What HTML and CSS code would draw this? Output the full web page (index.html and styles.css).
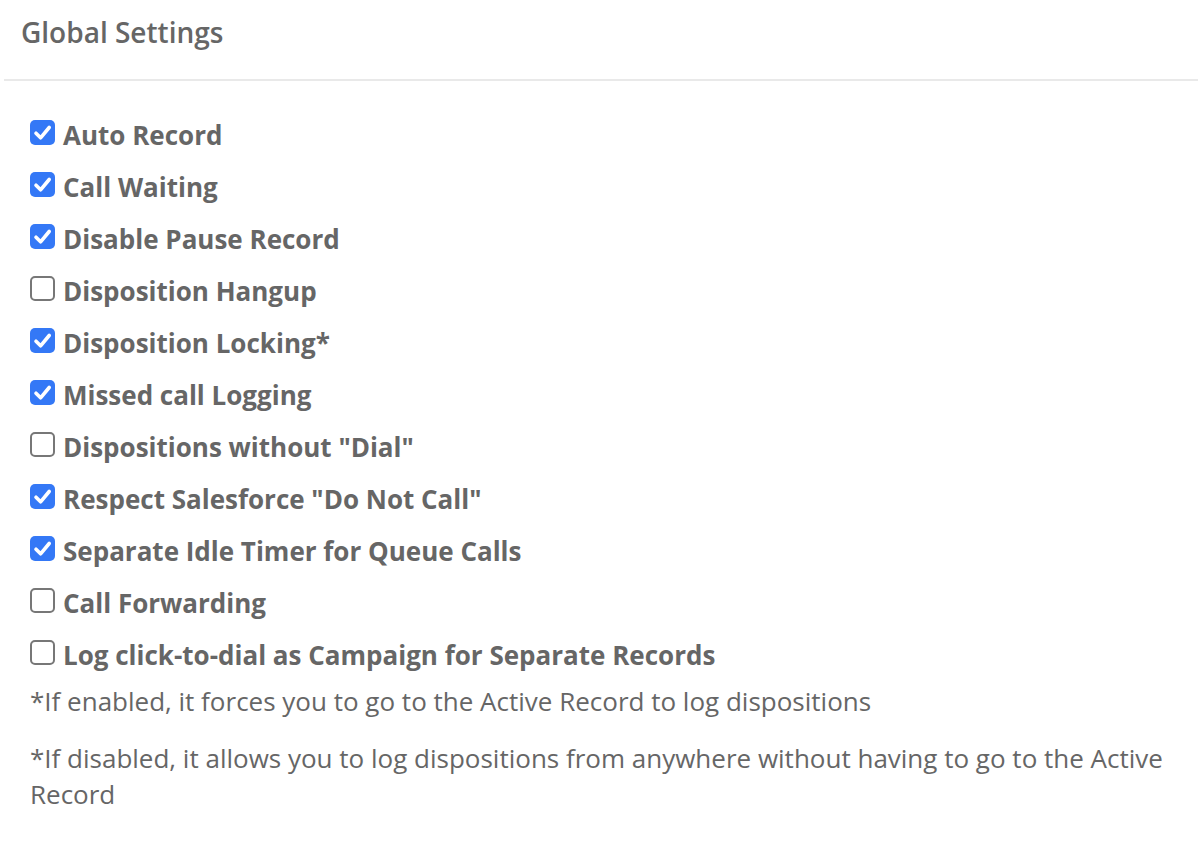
FILE: index.html
```html
<!DOCTYPE html>
<html>
<head>
<meta charset="utf-8">
<link rel="stylesheet" href="styles.css">
</head>
<body>
<div class="panel">
  <div class="panel-header">Global Settings</div>
  <div class="panel-body">
    <ul class="options">
      <li class="option"><span class="box checked"><svg viewBox="0 0 25 25"><path d="M6 13.2l4.6 4.6 8.6-10.3"/></svg></span><span class="label">Auto Record</span></li>
      <li class="option"><span class="box checked"><svg viewBox="0 0 25 25"><path d="M6 13.2l4.6 4.6 8.6-10.3"/></svg></span><span class="label">Call Waiting</span></li>
      <li class="option"><span class="box checked"><svg viewBox="0 0 25 25"><path d="M6 13.2l4.6 4.6 8.6-10.3"/></svg></span><span class="label">Disable Pause Record</span></li>
      <li class="option"><span class="box"></span><span class="label">Disposition Hangup</span></li>
      <li class="option"><span class="box checked"><svg viewBox="0 0 25 25"><path d="M6 13.2l4.6 4.6 8.6-10.3"/></svg></span><span class="label">Disposition Locking*</span></li>
      <li class="option"><span class="box checked"><svg viewBox="0 0 25 25"><path d="M6 13.2l4.6 4.6 8.6-10.3"/></svg></span><span class="label">Missed call Logging</span></li>
      <li class="option"><span class="box"></span><span class="label">Dispositions without "Dial"</span></li>
      <li class="option"><span class="box checked"><svg viewBox="0 0 25 25"><path d="M6 13.2l4.6 4.6 8.6-10.3"/></svg></span><span class="label">Respect Salesforce "Do Not Call"</span></li>
      <li class="option"><span class="box checked"><svg viewBox="0 0 25 25"><path d="M6 13.2l4.6 4.6 8.6-10.3"/></svg></span><span class="label">Separate Idle Timer for Queue Calls</span></li>
      <li class="option"><span class="box"></span><span class="label">Call Forwarding</span></li>
      <li class="option"><span class="box"></span><span class="label">Log click-to-dial as Campaign for Separate Records</span></li>
    </ul>
    <p class="note note-first">*If enabled, it forces you to go to the Active Record to log dispositions</p>
    <p class="note">*If disabled, it allows you to log dispositions from anywhere without having to go to the Active Record</p>
  </div>
</div>
</body>
</html>
```
FILE: styles.css
```css
html, body {
  margin: 0;
  padding: 0;
  background: #ffffff;
}
body {
  font-family: "Open Sans", "Liberation Sans", sans-serif;
  color: #666666;
}
.panel {
  margin: 0 3px 0 4px;
}
.panel-header {
  height: 81px;
  box-sizing: border-box;
  padding: 13px 0 0 17px;
  font-size: 28px;
  font-weight: 600;
  line-height: 38px;
  border-bottom: 2px solid #e9e9e9;
}
.panel-body {
  padding: 28px 0 0 26px;
}
.options {
  list-style: none;
  margin: 0;
  padding: 0;
  display: flex;
  flex-direction: column;
}
.option {
  height: 52px;
  display: flex;
  align-items: center;
  gap: 8px;
}
.box {
  width: 25px;
  height: 25px;
  box-sizing: border-box;
  border: 2px solid #777777;
  border-radius: 5px;
  display: flex;
  align-items: center;
  justify-content: center;
  flex: none;
  position: relative;
  top: -3px;
}
.box.checked {
  background: #3478f6;
  border: none;
}
.box svg {
  width: 25px;
  height: 25px;
  fill: none;
  stroke: #ffffff;
  stroke-width: 3.6;
  stroke-linecap: round;
  stroke-linejoin: round;
}
.label {
  font-size: 26px;
  font-weight: 700;
  line-height: 36px;
}
.note {
  margin: 0;
  font-size: 26px;
  line-height: 36px;
  padding-right: 30px;
}
.note-first {
  margin-top: 2px;
  margin-bottom: 21px;
}
```
